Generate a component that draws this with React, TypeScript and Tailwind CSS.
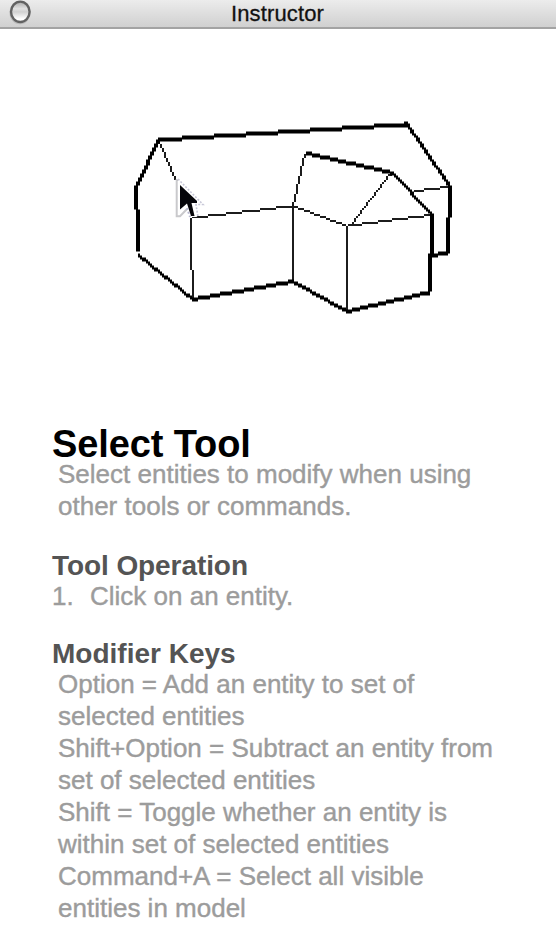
type Seg = [number, number, number, number];

// Line work is plotted on a grid of 2px cells; coordinates are in pixels.
const thick: Seg[] = [
  [158, 138.5, 404, 123],
  [404, 122, 448, 186],
  [448, 186, 448, 216],
  [446, 218, 446, 252],
  [432, 254, 446, 251],
  [156, 140, 134, 188],
  [134, 188, 134, 208],
  [136, 210, 136, 250],
  [138, 254, 192, 298],
  [192, 298, 292, 280],
  [292, 280, 346, 310],
  [346, 310, 428, 291],
  [428, 254, 428, 290],
  [430, 214, 430, 254],
  [390, 172, 430, 213],
  [306, 152, 390, 171],
];

const thin: Seg[] = [
  [158, 140, 176, 182],
  [190, 218, 190, 268],
  [192, 270, 192, 296],
  [190, 217, 292, 205],
  [292, 206, 304, 153],
  [292, 206, 292, 280],
  [292, 205, 346, 225],
  [346, 226, 346, 310],
  [346, 225, 430, 214],
  [350, 224, 390, 173],
  [414, 190, 448, 186],
];

function plot([x1, y1, x2, y2]: Seg, weight: number): string {
  const dx = (x2 - x1) / 2;
  const dy = (y2 - y1) / 2;
  const steps = Math.max(1, Math.round(Math.max(Math.abs(dx), Math.abs(dy))));
  const flat = Math.abs(dx) >= Math.abs(dy);
  let d = "";
  for (let i = 0; i <= steps; i++) {
    const x = Math.round(x1 / 2 + (dx * i) / steps) * 2;
    const y = Math.round(y1 / 2 + (dy * i) / steps) * 2;
    const w = flat ? 2 : 2 * weight;
    const h = flat ? 2 * weight : 2;
    d += `M${x} ${y}h${w}v${h}h${-w}z`;
  }
  return d;
}

function House() {
  return (
    <svg className="block h-[399px] w-full" viewBox="0 29 556 399">
      <path d={thin.map((s) => plot(s, 1)).join("")} fill="#1c1c1c" />
      <path d={thick.map((s) => plot(s, 2)).join("")} fill="#000" transform="translate(0 -0.6)" />
      <path d="M176 179V217H179L187 210L190 217H197L194 207H203V204Z" fill="#fff" />
      <path d="M176.700 179V216.300H180L187 209" fill="none" stroke="#c9c9cc" strokeWidth="2" />
      <path d="M178 179L203 204.500H196L198 217" fill="none" stroke="#c8c8d8" strokeWidth="1.600" strokeDasharray="2 1.500" />
      <path d="M187 208L190 217" fill="none" stroke="#b9b9d0" strokeWidth="2" strokeDasharray="2 2" />
      <path d="M180 185V209.500L187 203.500L191 216H194.500L191.500 203H197V201Z" fill="#06060a" />
    </svg>
  );
}

const modifiers = [
  "Option = Add an entity to set of",
  "selected entities",
  "Shift+Option = Subtract an entity from",
  "set of selected entities",
  "Shift = Toggle whether an entity is",
  "within set of selected entities",
  "Command+A = Select all visible",
  "entities in model",
];

export default function App() {
  return (
    <div className="h-[938px] w-[556px] overflow-hidden bg-white font-['Liberation_Sans',Arial,sans-serif] text-[26px] leading-8 whitespace-nowrap text-[#9c9c9c]">
      <header className="relative flex h-[29px] items-center justify-center border-b-2 border-[#a3a3a3] bg-linear-to-b from-[#ececec] to-[#d0d0d0]">
        <svg className="absolute top-0 left-[8px] h-[27px] w-[24px]" viewBox="0 0 24 27">
          <defs>
            <linearGradient id="lamp" x1="0" y1="0" x2="0" y2="1">
              <stop offset="0" stopColor="#a9a9a9" />
              <stop offset="0.350" stopColor="#e2e2e2" />
              <stop offset="0.500" stopColor="#d0d0d0" />
              <stop offset="0.850" stopColor="#ffffff" />
            </linearGradient>
          </defs>
          <ellipse cx="12" cy="13" rx="10.500" ry="11.200" fill="#8a8a8a" opacity="0.350" />
          <ellipse cx="12.300" cy="11.800" rx="9.300" ry="10.200" fill="url(#lamp)" stroke="#626262" strokeWidth="2.400" />
        </svg>
        <h1 className="pr-px text-[22px] leading-[27px] tracking-[0.150px] text-[#111] [-webkit-text-stroke:0.300px_#111]">Instructor</h1>
      </header>
      <House />
      <main className="pl-[52px]">
        <h2 className="h-[30px] text-[38px] leading-[33px] font-bold tracking-[-0.100px] text-black">Select Tool</h2>
        <div className="pl-[6px] [-webkit-text-stroke:0.400px_#9c9c9c]">
          <p>Select entities to modify when using</p>
          <p>other tools or commands.</p>
        </div>
        <h3 className="mt-[28px] h-[30px] text-[28px] leading-8 font-bold tracking-[-0.080px] text-[#545454]">Tool Operation</h3>
        <ol className="[-webkit-text-stroke:0.400px_#9c9c9c]">
          <li className="flex"><span className="w-[38px]">1.</span>Click on an entity.</li>
        </ol>
        <h3 className="mt-[26px] h-[30px] text-[28px] leading-8 font-bold text-[#545454]">Modifier Keys</h3>
        <div className="pl-[6px] [-webkit-text-stroke:0.400px_#9c9c9c]">
          {modifiers.map((line) => (
            <p key={line}>{line}</p>
          ))}
        </div>
      </main>
    </div>
  );
}
